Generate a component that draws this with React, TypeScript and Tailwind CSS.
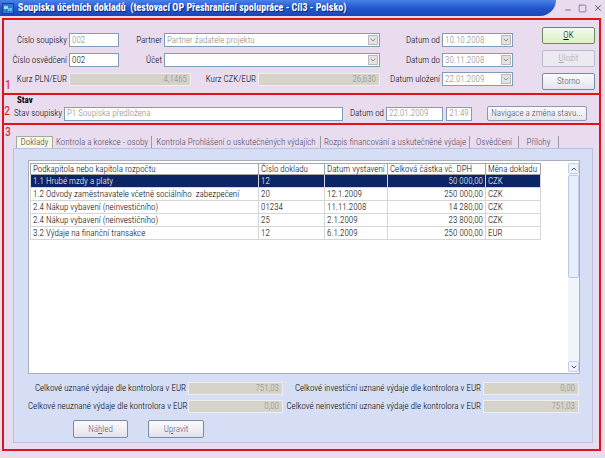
import { ChevronDown, ChevronUp, Minus, Square, X } from 'lucide-react';
import type { ReactNode } from 'react';

const rows = [
  { name: '1.1 Hrubé mzdy a platy', no: '12', date: '', amount: '50 000,00', cur: 'CZK', selected: true },
  { name: '1.2 Odvody zaměstnavatele včetně sociálního  zabezpečení', no: '20', date: '12.1.2009', amount: '250 000,00', cur: 'CZK' },
  { name: '2.4 Nákup vybavení (neinvestičního)', no: '01234', date: '11.11.2008', amount: '14 280,00', cur: 'CZK' },
  { name: '2.4 Nákup vybavení (neinvestičního)', no: '25', date: '2.1.2009', amount: '23 800,00', cur: 'CZK' },
  { name: '3.2 Výdaje na finanční transakce', no: '12', date: '6.1.2009', amount: '250 000,00', cur: 'EUR' },
];

const tabs = [
  { label: 'Doklady', w: 'w-[37px]', active: true },
  { label: 'Kontrola a korekce - osoby', w: 'w-[99px]' },
  { label: 'Kontrola Prohlášení o uskutečněných výdajích', w: 'w-[169px]' },
  { label: 'Rozpis financování a uskutečněné výdaje', w: 'w-[149px]' },
  { label: 'Osvědčení', w: 'w-[49px]' },
  { label: 'Přílohy', w: 'w-[40px]' },
];

function Label({ className, children }: { className: string; children: ReactNode }) {
  return <div className={`shrink-0 whitespace-nowrap pr-[2px] text-right ${className}`}>{children}</div>;
}

function Input({ className, children, muted = true }: { className: string; children?: ReactNode; muted?: boolean }) {
  return (
    <div
      className={`flex h-[14px] shrink-0 items-center whitespace-nowrap border border-[#7f9db9] bg-white px-[2px] ${
        muted ? 'text-[#8a8a8a]' : 'text-black'
      } ${className}`}
    >
      {children}
    </div>
  );
}

function Combo({ className, children }: { className: string; children?: ReactNode }) {
  return (
    <div className={`flex h-[14px] shrink-0 items-center border border-[#7f9db9] bg-white pl-[2px] text-[#8a8a8a] ${className}`}>
      <span className="flex-1 truncate">{children}</span>
      <div className="mr-[1px] flex h-[10px] w-[10px] items-center justify-center border border-[#b9b9b9] bg-[#e3e3e3]">
        <ChevronDown size={8} strokeWidth={3} className="text-[#8c8c8c]" />
      </div>
    </div>
  );
}

function Disabled({ className, children }: { className: string; children: ReactNode }) {
  return (
    <div className={`flex h-[13px] shrink-0 items-center justify-end border border-[#eeeeee] bg-[#d6d3ca] pr-[3px] text-[#8f8f8f] ${className}`}>
      {children}
    </div>
  );
}

function XpButton({ className, children }: { className: string; children: ReactNode }) {
  return (
    <div className={`flex shrink-0 items-center justify-center whitespace-nowrap rounded-[2px] border ${className}`}>
      {children}
    </div>
  );
}

export default function App() {
  return (
    <div className="h-[458px] w-[605px] overflow-hidden bg-[#e9dcef] font-['Roboto_Condensed','Liberation_Sans_Narrow','Liberation_Sans',Arial,sans-serif] text-[9px] font-light leading-none text-black">
      {/* title bar */}
      <div className="flex h-[16px] items-stretch">
        <div className="flex w-[556px] items-center gap-[4px] rounded-br-[16px] bg-gradient-to-b from-[#4a82ea] via-[#2356cc] to-[#1a47b8] pl-[2px]">
          <svg width="12" height="11" viewBox="0 0 12 11">
            <rect x="0" y="0" width="12" height="11" fill="#1b3f9a" />
            <rect x="1" y="1" width="10" height="9" fill="#2d7bd8" />
            <rect x="2" y="3" width="4" height="3" fill="#8fe0ff" />
            <rect x="6" y="5" width="4" height="3" fill="#5fb8f0" />
          </svg>
          <span className="whitespace-pre text-[10px] font-bold text-white [text-shadow:1px_1px_0_#0b2a78]">
            Soupiska účetních dokladů  (testovací OP Přeshraniční spolupráce - Cíl3 - Polsko)
          </span>
        </div>
        <div className="flex flex-1 items-center justify-end gap-[6px] pr-[2px] text-[#6a6a88]">
          <Minus size={8} strokeWidth={3} className="mt-[4px]" />
          <Square size={9} strokeWidth={2} />
          <X size={10} strokeWidth={2.5} />
        </div>
      </div>

      <div className="ml-[2px] mt-[2px] w-[599px] border-2 border-[#e3131c]">
        {/* section 1 */}
        <div className="relative flex h-[73px]">
          <span className="absolute left-[1px] top-[59px] text-[12px] font-normal text-[#e3131c]">1</span>
          <div className="flex flex-col gap-[5px] pt-[13px]">
            <div className="flex h-[14px] items-center">
              <Label className="w-[65px]">Číslo soupisky</Label>
              <Input className="w-[50px]">002</Input>
              <Label className="w-[45px]">Partner</Label>
              <Combo className="w-[216px]">Partner žadatele projektu</Combo>
              <Label className="w-[62px]">Datum od</Label>
              <Combo className="w-[71px]">10.10.2008</Combo>
            </div>
            <div className="mt-[1px] flex h-[14px] items-center">
              <Label className="w-[65px]">Číslo osvědčení</Label>
              <Input className="w-[50px]" muted={false}>002</Input>
              <Label className="w-[45px]">Účet</Label>
              <Combo className="w-[216px]" />
              <Label className="w-[62px]">Datum do</Label>
              <Combo className="w-[71px]">30.11.2008</Combo>
            </div>
            <div className="flex h-[14px] items-center">
              <Label className="w-[65px]">Kurz PLN/EUR</Label>
              <Disabled className="w-[122px]">4,1465</Disabled>
              <Label className="w-[67px]">Kurz CZK/EUR</Label>
              <Disabled className="w-[122px]">26,630</Disabled>
              <Label className="w-[62px]">Datum uložení</Label>
              <Combo className="w-[71px]">22.01.2009</Combo>
            </div>
          </div>
          <div className="ml-[29px] flex flex-col gap-[6px] pt-[7px]">
            <XpButton className="h-[17px] w-[53px] border-[#6f8b63] bg-gradient-to-b from-[#f4fbe8] to-[#dcefc6]">
              <span className="underline">O</span>K
            </XpButton>
            <XpButton className="h-[17px] w-[53px] border-[#b6bccb] bg-[#ebe9f1] text-[#a6a6b6]">
              <span className="underline">U</span>ložit
            </XpButton>
            <XpButton className="h-[17px] w-[53px] border-[#7b89a6] bg-gradient-to-b from-[#fbfbfd] to-[#e4e4ee] text-[#4c4c66]">
              Storno
            </XpButton>
          </div>
        </div>

        {/* section 2 */}
        <div className="relative h-[30px] border-t-2 border-[#e3131c]">
          <div className="pl-[13px] pt-[1px] font-bold">Stav</div>
          <span className="absolute left-[0px] top-[10px] text-[12px] font-normal text-[#e3131c]">2</span>
          <div className="mt-[1px] flex h-[15px] items-center">
            <Label className="w-[60px]">Stav soupisky</Label>
            <Input className="w-[279px]">P1 Soupiska předložena</Input>
            <Label className="w-[43px]">Datum od</Label>
            <Input className="w-[57px]">22.01.2009</Input>
            <Input className="ml-[3px] w-[26px] justify-center">21:49</Input>
            <XpButton className="ml-[15px] h-[15px] w-[100px] border-[#8d97ad] bg-gradient-to-b from-[#fbfbfc] to-[#e6e6ec] text-[#4c4c66]">
              Navigace a změna stavu...
            </XpButton>
          </div>
        </div>

        {/* section 3 */}
        <div className="relative h-[326px] border-t-2 border-[#e3131c]">
          <span className="absolute left-[1px] top-[1px] text-[12px] font-normal text-[#e3131c]">3</span>
          <div className="ml-[9px] w-[580px] pt-[11px]">
            <div className="flex h-[12px] items-stretch pl-[3px]">
              {tabs.map((t) => (
                <div
                  key={t.label}
                  className={`flex shrink-0 items-center justify-center whitespace-nowrap ${t.w} ${
                    t.active
                      ? 'border border-b-0 border-[#a7a7a7] bg-[#f6f9e2] text-[#3d3d55]'
                      : 'border-r border-[#9a9aae] text-[#4a4a66]'
                  }`}
                >
                  {t.label}
                </div>
              ))}
            </div>
            <div className="h-[295px] border border-[#b8c1dc] bg-[#d5def5] pl-[14px] pt-[11px]">
              <div className="flex h-[214px] w-[552px] border border-[#a9b0bd] bg-white pl-[1px] pt-[2px]">
                <div className="w-[511px] text-black">
                  <div className="grid h-[12px] grid-cols-[228px_66px_63px_98px_56px] border border-[#a5a5a5]">
                    {['Podkapitola nebo kapitola rozpočtu', 'Číslo dokladu', 'Datum vystavení', 'Celková částka vč. DPH', 'Měna dokladu'].map(
                      (h) => (
                        <div key={h} className="flex items-center whitespace-nowrap border-r border-[#a5a5a5] px-[2px] last:border-r-0">
                          {h}
                        </div>
                      ),
                    )}
                  </div>
                  {rows.map((r, i) => (
                    <div
                      key={i}
                      className={`grid h-[13px] grid-cols-[228px_66px_63px_98px_56px] border-x border-b border-[#d6d6d6] ${
                        r.selected ? 'bg-[#0b2565] text-white' : ''
                      }`}
                    >
                      <div className="flex items-center whitespace-pre border-r border-[#d6d6d6] px-[2px]">{r.name}</div>
                      <div className="flex items-center border-r border-[#d6d6d6] px-[2px]">{r.no}</div>
                      <div className="flex items-center border-r border-[#d6d6d6] px-[2px]">{r.date}</div>
                      <div className="flex items-center justify-end border-r border-[#d6d6d6] px-[2px]">{r.amount}</div>
                      <div className="flex items-center px-[2px]">{r.cur}</div>
                    </div>
                  ))}
                </div>
                <div className="ml-auto flex h-[209px] w-[11px] flex-col bg-[#f2f4fb]">
                  <div className="flex h-[11px] items-center justify-center rounded-[2px] border border-[#c3cde6] bg-[#eef2fc]">
                    <ChevronUp size={8} strokeWidth={3} className="text-[#4d5a78]" />
                  </div>
                  <div className="mt-[1px] h-[103px] rounded-[2px] border border-[#bccaea] bg-[#e9eefb]" />
                  <div className="flex-1" />
                  <div className="flex h-[11px] items-center justify-center rounded-[2px] border border-[#c3cde6] bg-[#eef2fc]">
                    <ChevronDown size={8} strokeWidth={3} className="text-[#4d5a78]" />
                  </div>
                </div>
              </div>

              <div className="mt-[8px] flex h-[13px] items-center">
                <Label className="w-[160px]">Celkové uznané výdaje dle kontrolora v EUR</Label>
                <Disabled className="w-[95px]">751,03</Disabled>
                <Label className="w-[200px]">Celkové investiční uznané výdaje dle kontrolora v EUR</Label>
                <Disabled className="w-[96px]">0,00</Disabled>
              </div>
              <div className="mt-[5px] flex h-[13px] items-center">
                <Label className="w-[160px]">Celkové neuznané výdaje dle kontrolora v EUR</Label>
                <Disabled className="w-[95px]">0,00</Disabled>
                <Label className="w-[200px]">Celkové neinvestiční uznané výdaje dle kontrolora v EUR</Label>
                <Disabled className="w-[96px]">751,03</Disabled>
              </div>
              <div className="ml-[45px] mt-[7px] flex gap-[20px] text-[#5a5a74]">
                <XpButton className="h-[18px] w-[55px] border-[#7b89a6] bg-gradient-to-b from-[#fbfbfd] to-[#e2e2ec]">
                  Ná<span className="underline">h</span>led
                </XpButton>
                <XpButton className="h-[18px] w-[56px] border-[#7b89a6] bg-gradient-to-b from-[#fbfbfd] to-[#e2e2ec]">
                  U<span className="underline">p</span>ravit
                </XpButton>
              </div>
            </div>
          </div>
        </div>
      </div>
    </div>
  );
}
